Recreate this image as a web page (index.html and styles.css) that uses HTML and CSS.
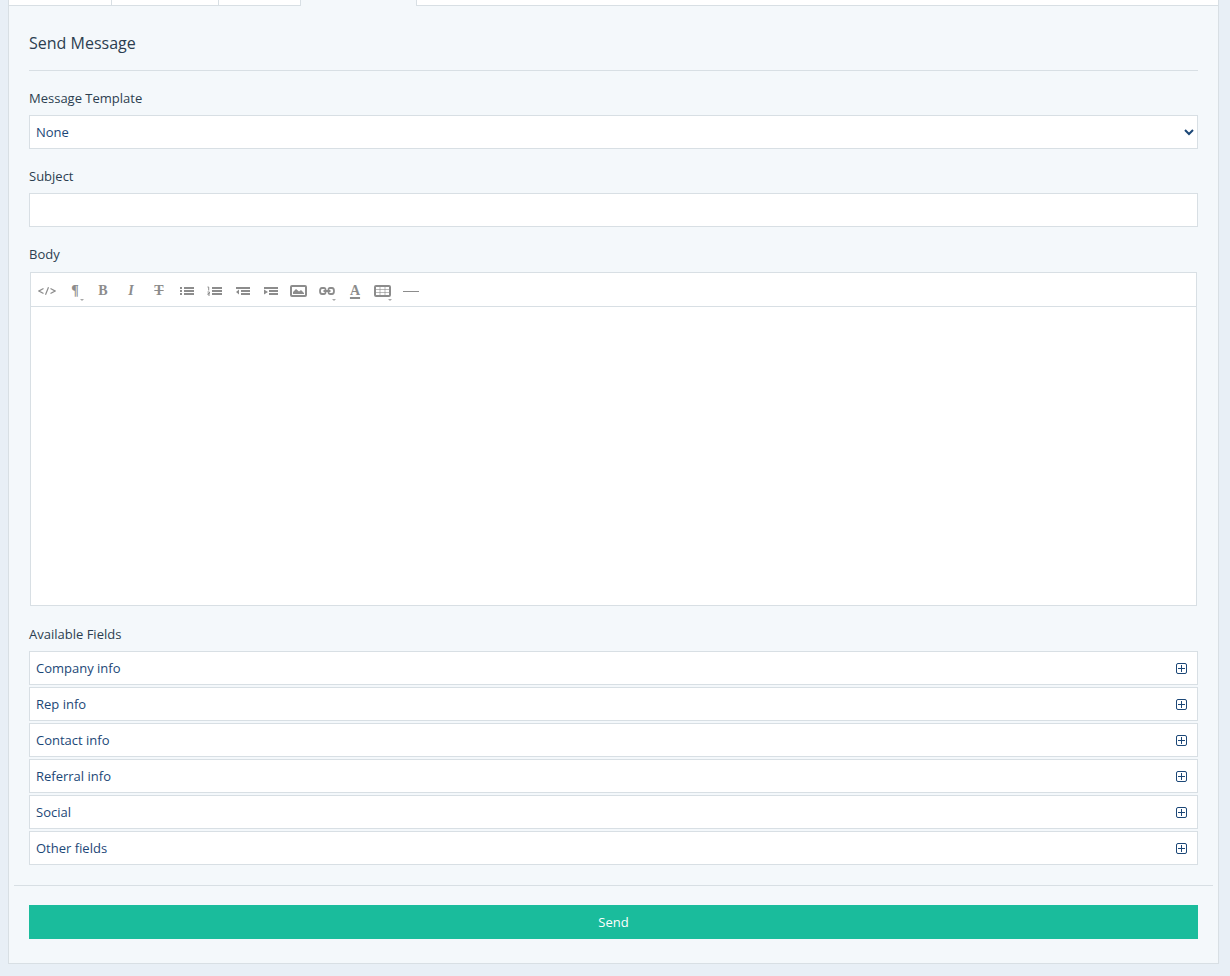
FILE: index.html
```
<!DOCTYPE html>
<html lang="en">
<head>
  <meta charset="UTF-8">
  <meta name="viewport" content="width=device-width, initial-scale=1.0">
  <title>Send Message</title>
  <link rel="stylesheet" href="styles.css">
</head>
<body>

  <!-- shared icon for the collapsible rows -->
  <svg class="sprite" width="0" height="0" aria-hidden="true">
    <symbol id="plus" viewBox="0 0 11 11">
      <rect x="0.5" y="0.5" width="10" height="10" rx="1.5" fill="none" stroke="currentColor"/>
      <path d="M2 5.5h7M5.5 2v7" stroke="currentColor"/>
    </symbol>
  </svg>

  <main class="panel">
    <div class="tabs">
      <div class="tab"></div>
      <div class="tab tab-wide"></div>
      <div class="tab tab-small"></div>
      <div class="tab-active"></div>
      <div class="tab-rest"></div>
    </div>

    <form class="message">
      <h1>Send Message</h1>

      <div class="group">
        <label for="template">Message Template</label>
        <div class="select">
          <select id="template" name="template">
            <option>None</option>
          </select>
          <svg class="arrow" width="10" height="7" viewBox="0 0 10 7" aria-hidden="true">
            <path d="M1 1l4 4 4-4" fill="none" stroke="currentColor" stroke-width="2"/>
          </svg>
        </div>
      </div>

      <div class="group">
        <label for="subject">Subject</label>
        <input type="text" id="subject" name="subject">
      </div>

      <div class="group">
        <label for="body">Body</label>
        <div class="editor">
          <div class="toolbar">
            <button type="button" title="HTML">
              <svg width="18" height="8" viewBox="0 0 18 8" fill="none" stroke="currentColor" stroke-width="1.2">
                <path d="M5.500 1.500L1 4l4.500 2.500M12.500 1.500L17 4l-4.500 2.500M10.500 0.300L7.500 7.700"/>
              </svg>
            </button>
            <button type="button" class="has-menu" title="Formatting">¶</button>
            <button type="button" title="Bold">B</button>
            <button type="button" class="italic" title="Italic">I</button>
            <button type="button" class="strike" title="Deleted">T</button>
            <button type="button" title="Unordered list">
              <svg width="14" height="8" viewBox="0 0 14 8" fill="currentColor">
                <path d="M0 0h2v2H0zM0 3h2v2H0zM0 6h2v2H0zM4 0h10v2H4zM4 3h10v2H4zM4 6h10v2H4z"/>
              </svg>
            </button>
            <button type="button" title="Ordered list">
              <svg width="16" height="10" viewBox="0 0 16 10" fill="currentColor">
                <path d="M5 1h10v2H5zM5 4h10v2H5zM5 7h10v2H5z"/>
                <path d="M0.500 1h1.200v3.500M0.500 6h2v1.500h-1.500v1.500h2" fill="none" stroke="currentColor"/>
              </svg>
            </button>
            <button type="button" title="Outdent">
              <svg width="14" height="8" viewBox="0 0 14 8" fill="currentColor">
                <path d="M0 0h14v2H0zM5 3h9v2H5zM5 6h9v2H5zM3 2.500v5L0 5z"/>
              </svg>
            </button>
            <button type="button" title="Indent">
              <svg width="14" height="8" viewBox="0 0 14 8" fill="currentColor">
                <path d="M0 0h14v2H0zM5 3h9v2H5zM5 6h9v2H5zM0 2.500v5L4 5z"/>
              </svg>
            </button>
            <button type="button" title="Insert image">
              <svg width="18" height="12" viewBox="0 0 18 12">
                <rect x="1" y="1" width="15" height="10" rx="1" fill="none" stroke="currentColor" stroke-width="2"/>
                <path d="M3 9V7l3-3 3 2.500 2-1.500 3 3v1z" fill="currentColor"/>
              </svg>
            </button>
            <button type="button" class="has-menu" title="Link">
              <svg width="16" height="8" viewBox="0 0 16 8" fill="none" stroke="currentColor" stroke-width="1.8">
                <path d="M6.500 3V2.500Q6.500 1 5 1H3Q1 1 1 4t2 3h2q1.500 0 1.500-1.500V5M9.500 3V2.500Q9.500 1 11 1h2q2 0 2 3t-2 3h-2Q9.500 7 9.500 5.500V5M4.500 4h7"/>
              </svg>
            </button>
            <button type="button" class="color" title="Font color">A</button>
            <button type="button" class="has-menu" title="Table">
              <svg width="18" height="12" viewBox="0 0 18 12" fill="none" stroke="currentColor">
                <rect x="1" y="1" width="15" height="10" rx="1" stroke-width="2"/>
                <path d="M6 2v8M11 2v8M2 4.500h13M2 7.500h13" stroke-width="0.600"/>
              </svg>
            </button>
            <button type="button" title="Insert horizontal rule">
              <svg width="16" height="1" viewBox="0 0 16 1"><path d="M0 0h16v1H0z" fill="currentColor"/></svg>
            </button>
          </div>
          <textarea id="body" name="body"></textarea>
        </div>
      </div>

      <section class="fields">
        <h2>Available Fields</h2>
        <button type="button">Company info <svg width="11" height="11"><use href="#plus"/></svg></button>
        <button type="button">Rep info <svg width="11" height="11"><use href="#plus"/></svg></button>
        <button type="button">Contact info <svg width="11" height="11"><use href="#plus"/></svg></button>
        <button type="button">Referral info <svg width="11" height="11"><use href="#plus"/></svg></button>
        <button type="button">Social <svg width="11" height="11"><use href="#plus"/></svg></button>
        <button type="button">Other fields <svg width="11" height="11"><use href="#plus"/></svg></button>
      </section>

      <div class="actions">
        <button type="submit" class="send">Send</button>
      </div>
    </form>
  </main>

</body>
</html>
```

FILE: styles.css
```
* {
  box-sizing: border-box;
}

body {
  margin: 0;
  padding: 0 11px 12px 8px;
  background-color: #e8eff6;
  color: #2c3e50;
  font-family: "Open Sans", sans-serif;
  font-size: 13px;
  line-height: 18px;
}

button, input, select, textarea {
  font: inherit;
  color: #1c4777;
}

button {
  cursor: pointer;
}

.sprite {
  display: block;
}

.panel {
  background-color: #f4f8fb;
  border: 1px solid #d8dfe4;
  border-top: none;
}

/* bottom edge of the tab bar */
.tabs {
  display: flex;
  height: 6px;
}

.tab,
.tab-rest {
  background-color: #fff;
  border-bottom: 1px solid #d8dfe4;
}

.tab {
  width: 103px;
  border-right: 1px solid #d8dfe4;
}

.tab-wide {
  width: 107px;
}

.tab-small {
  width: 82px;
}

.tab-active {
  width: 115px;
}

.tab-rest {
  flex: 1;
  border-left: 1px solid #d8dfe4;
}

.message {
  padding: 24px 20px;
}

h1 {
  margin: 0 0 18px;
  padding: 1px 0 15px;
  border-bottom: 1px solid #d8dfe4;
  font-size: 16px;
  font-weight: normal;
  line-height: 24px;
}

.group {
  margin-bottom: 18px;
}

label,
h2 {
  display: block;
  margin: 0 0 8px;
  font-size: 13px;
  font-weight: normal;
}

.select {
  position: relative;
}

select,
input[type="text"] {
  display: block;
  width: 100%;
  height: 34px;
  padding: 0 6px;
  border: 1px solid #d8dfe4;
  border-radius: 0;
  background-color: #fff;
  appearance: none;
}

.arrow {
  position: absolute;
  top: 14px;
  right: 4px;
  color: #1c4777;
  pointer-events: none;
}

.editor {
  margin: 9px 1px 19px;
  border: 1px solid #d8dfe4;
  background-color: #fff;
}

.toolbar {
  display: flex;
  height: 34px;
  padding: 2px;
  border-bottom: 1px solid #d8dfe4;
}

.toolbar button {
  position: relative;
  display: flex;
  align-items: center;
  justify-content: center;
  width: 28px;
  height: 32px;
  padding: 0;
  border: none;
  background: none;
  color: #8c8c8c;
  font-family: "Liberation Serif", serif;
  font-size: 14px;
  font-weight: bold;
}

.toolbar .italic {
  font-style: italic;
}

.toolbar .strike {
  text-decoration: line-through;
}

.toolbar .color {
  text-decoration: underline 2px;
  text-underline-offset: 2px;
}

.has-menu::after {
  content: "";
  position: absolute;
  right: 5px;
  bottom: 6px;
  border: 2px solid transparent;
  border-top-color: #a8a8a8;
  border-bottom: none;
}

textarea {
  display: block;
  width: 100%;
  height: 298px;
  padding: 10px;
  border: none;
  background: none;
  resize: none;
}

.fields button {
  display: flex;
  align-items: center;
  justify-content: space-between;
  width: 100%;
  height: 34px;
  margin-bottom: 2px;
  padding: 0 10px 0 6px;
  border: 1px solid #d8dfe4;
  background-color: #fff;
}

.actions {
  margin: 20px -15px 0;
  padding: 19px 15px 0;
  border-top: 1px solid #d8dfe4;
}

.send {
  display: block;
  width: 100%;
  height: 34px;
  border: none;
  background-color: #1abc9c;
  color: #fff;
}
```
